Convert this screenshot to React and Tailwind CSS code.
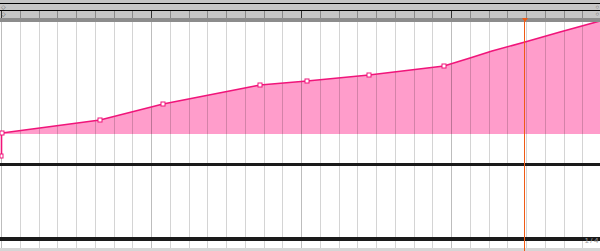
import React from "react";

const W = 600;
const xs = Array.from({ length: 32 }, (_, k) => Math.round(1 + 18.75 * k) + 0.5);

function Grid({ h }) {
  return xs.map((x, i) => (
    <line
      key={i}
      x1={x}
      x2={x}
      y1={0}
      y2={h}
      stroke={i % 8 === 0 ? "rgba(0,0,0,0.26)" : "rgba(0,0,0,0.17)"}
      strokeWidth="1"
    />
  ));
}

const curve = [
  [2, 111],
  [100, 98],
  [163, 82],
  [260, 63],
  [307, 59],
  [369, 53],
  [444, 44],
  [470, 36],
  [492, 29],
  [525, 20],
  [560, 10],
  [600, -1],
];
const markers = [
  [2, 111],
  [100, 98],
  [163, 82],
  [260, 63],
  [307, 59],
  [369, 53],
  [444, 44],
];

export default function App() {
  const line = curve.map((p) => p.join(",")).join(" ");
  const fill = `2,112 ${line} 600,112`;
  const labels = [1, 2, 3, 4, 5, 6, 7];

  return (
    <div className="relative w-[600px] h-[251px] overflow-hidden bg-white" style={{ fontFamily: "'Liberation Sans', Arial, sans-serif" }}>
      {/* ruler: numbers cut off at the top */}
      <div className="relative h-[3px] bg-[#c4c4c4] overflow-hidden">
        {labels.map((n) => (
          <span key={n} className="absolute top-[-6px] text-[8px] leading-[8px] text-[#555]" style={{ left: 78 + (n - 1) * 75 }}>
            {n}
          </span>
        ))}
      </div>
      <div className="h-px bg-black" />
      <div className="flex items-center justify-between h-[6px] bg-[#c6c6c6] px-px text-[6px] leading-[6px] text-[#555]">
        <span>◇</span>
        <span>○</span>
      </div>
      <div className="h-px bg-black" />
      <div className="relative h-[7px] bg-[#c6c6c6]">
        <svg width={W} height="7" className="absolute inset-0">
          {xs.map((x, i) => (
            <line key={i} x1={x} x2={x} y1={0} y2={7} stroke={i % 8 === 0 ? "#333" : "#8a8a8a"} />
          ))}
        </svg>
        <span className="absolute left-px top-0 text-[6px] leading-[6px] text-[#444]">◇</span>
        <span className="absolute right-px top-0 text-[6px] leading-[6px] text-[#444]">○</span>
      </div>
      <div className="h-[4px] bg-[#8c8c8c]" />

      {/* automation lane */}
      <div className="h-[141px]">
        <svg width={W} height="141" className="block">
          <polygon points={fill} fill="#ff9dcb" />
          <Grid h={141} />
          <polyline points={line} fill="none" stroke="#f0157a" strokeWidth="1.6" />
          <line x1="1.5" x2="1.5" y1="111" y2="135" stroke="#f0157a" strokeWidth="1.6" />
          {markers.map(([x, y], i) => (
            <rect key={i} x={x - 2} y={y - 2} width="4" height="4" fill="white" stroke="#f0157a" strokeWidth="1" />
          ))}
          <rect x="0" y="132" width="3" height="4" fill="white" stroke="#f0157a" strokeWidth="1" />
        </svg>
      </div>
      <div className="h-[3px] bg-[#1a1a1a]" />

      <div className="h-[71px]">
        <svg width={W} height="71" className="block">
          <Grid h={71} />
        </svg>
      </div>
      <div className="h-[4px] bg-[#1a1a1a]" />
      <div className="h-[7px]">
        <svg width={W} height="7" className="block">
          <Grid h={7} />
        </svg>
      </div>
      <div className="h-[3px] bg-[#d6d6d6]" />

      {/* page counter */}
      <span className="absolute right-[2px] top-[236px] text-[8px] leading-[10px] text-[#9a9a9a] tracking-tighter">1 / 4</span>

      {/* playhead */}
      <div className="absolute left-[524px] top-[18px] bottom-0 w-px bg-[#f05a14]" />
      <div className="absolute left-[522px] top-[18px] w-0 h-0 border-l-[3px] border-r-[3px] border-t-[4px] border-l-transparent border-r-transparent border-t-[#f05a14]" />
    </div>
  );
}
